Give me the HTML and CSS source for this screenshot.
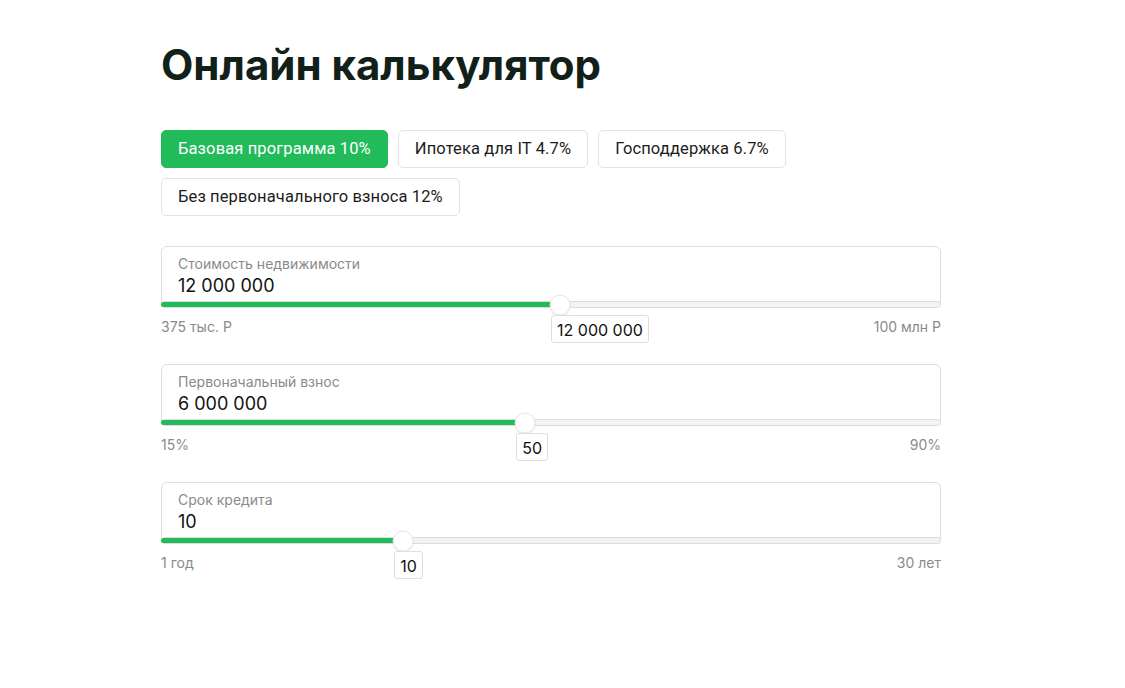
FILE: index.html
```html
<!DOCTYPE html>
<html lang="ru">
<head>
<meta charset="utf-8">
<title>Онлайн калькулятор</title>
<link rel="stylesheet" href="styles.css">
</head>
<body>
<main class="page">
  <h1 class="title">Онлайн калькулятор</h1>
  <div class="programs">
    <button class="chip chip-active">Базовая программа 10%</button>
    <button class="chip">Ипотека для IT 4.7%</button>
    <button class="chip">Господдержка 6.7%</button>
    <button class="chip">Без первоначального взноса 12%</button>
  </div>

  <div class="group">
    <div class="field">
      <div class="field-label">Стоимость недвижимости</div>
      <div class="field-value">12 000 000</div>
      <div class="track" style="--pos: 51.16%">
        <div class="fill"></div>
        <div class="thumb"></div>
        <div class="bubble">12 000 000</div>
      </div>
    </div>
    <div class="scale"><span>375 тыс. Р</span><span>100 млн Р</span></div>
  </div>

  <div class="group">
    <div class="field">
      <div class="field-label">Первоначальный взнос</div>
      <div class="field-value">6 000 000</div>
      <div class="track" style="--pos: 46.7%">
        <div class="fill"></div>
        <div class="thumb"></div>
        <div class="bubble">50</div>
      </div>
    </div>
    <div class="scale"><span>15%</span><span>90%</span></div>
  </div>

  <div class="group">
    <div class="field">
      <div class="field-label">Срок кредита</div>
      <div class="field-value">10</div>
      <div class="track" style="--pos: 31%">
        <div class="fill"></div>
        <div class="thumb"></div>
        <div class="bubble">10</div>
      </div>
    </div>
    <div class="scale"><span>1 год</span><span>30 лет</span></div>
  </div>
</main>
</body>
</html>
```

FILE: styles.css
```css
* { box-sizing: border-box; }
html, body { margin: 0; padding: 0; background: #fff; }
body { font-family: Inter, "Noto Sans", sans-serif; color: #111; }

.page {
  width: 803px;
  margin: 0 auto;
  padding-top: 41px;
}

.title {
  margin: 0 0 41px;
  font-family: Inter, sans-serif;
  font-weight: 700;
  font-size: 42px;
  line-height: 48px;
  color: #12201a;
}

.programs {
  display: flex;
  flex-wrap: wrap;
  gap: 10px 10px;
  max-width: 660px;
  margin-bottom: 30px;
}

.chip {
  font-family: Roboto, sans-serif;
  font-size: 16.5px;
  letter-spacing: 0.12px;
  line-height: 20px;
  padding: 8px 16px;
  border: 1px solid #e2e2e2;
  border-radius: 5px;
  background: #fff;
  color: #1c1c1c;
  cursor: pointer;
}
.chip-active {
  background: #22bb59;
  border-color: #22bb59;
  color: #fff;
}

.group {
  width: 780px;
  margin-bottom: 27px;
}

.field {
  border: 1px solid #dedede;
  border-radius: 6px;
  padding: 7px 16px 0;
}

.field-label {
  font-size: 14px;
  line-height: 20px;
  color: #8a8a8a;
}

.field-value {
  margin-top: 2px;
  font-size: 18px;
  line-height: 20px;
  color: #111;
}

.track {
  position: relative;
  height: 7px;
  margin: 5px -17px -1px;
  border: 1px solid #dcdcdc;
  border-radius: 4px;
  background: #f3f3f3;
}

.fill {
  position: absolute;
  left: -1px;
  top: 0;
  bottom: 0;
  width: calc(var(--pos) + 1px);
  background: #22bb59;
  border-radius: 3px 0 0 3px;
}

.thumb {
  position: absolute;
  left: var(--pos);
  top: 50%;
  width: 21px;
  height: 21px;
  transform: translate(-50%, -50%);
  border-radius: 50%;
  background: #fff;
  border: 1px solid #e6e6e6;
  box-shadow: 0 1px 2px rgba(0, 0, 0, 0.08);
}

.bubble {
  position: absolute;
  left: calc(var(--pos) - 9px);
  top: 13px;
  padding: 4px 5px 2px;
  font-size: 16px;
  line-height: 20px;
  color: #111;
  background: #fff;
  border: 1px solid #dedede;
  border-radius: 3px;
  white-space: nowrap;
}

.scale {
  display: flex;
  justify-content: space-between;
  margin-top: 9px;
  font-size: 14px;
  line-height: 20px;
  color: #8a8a8a;
}
```
